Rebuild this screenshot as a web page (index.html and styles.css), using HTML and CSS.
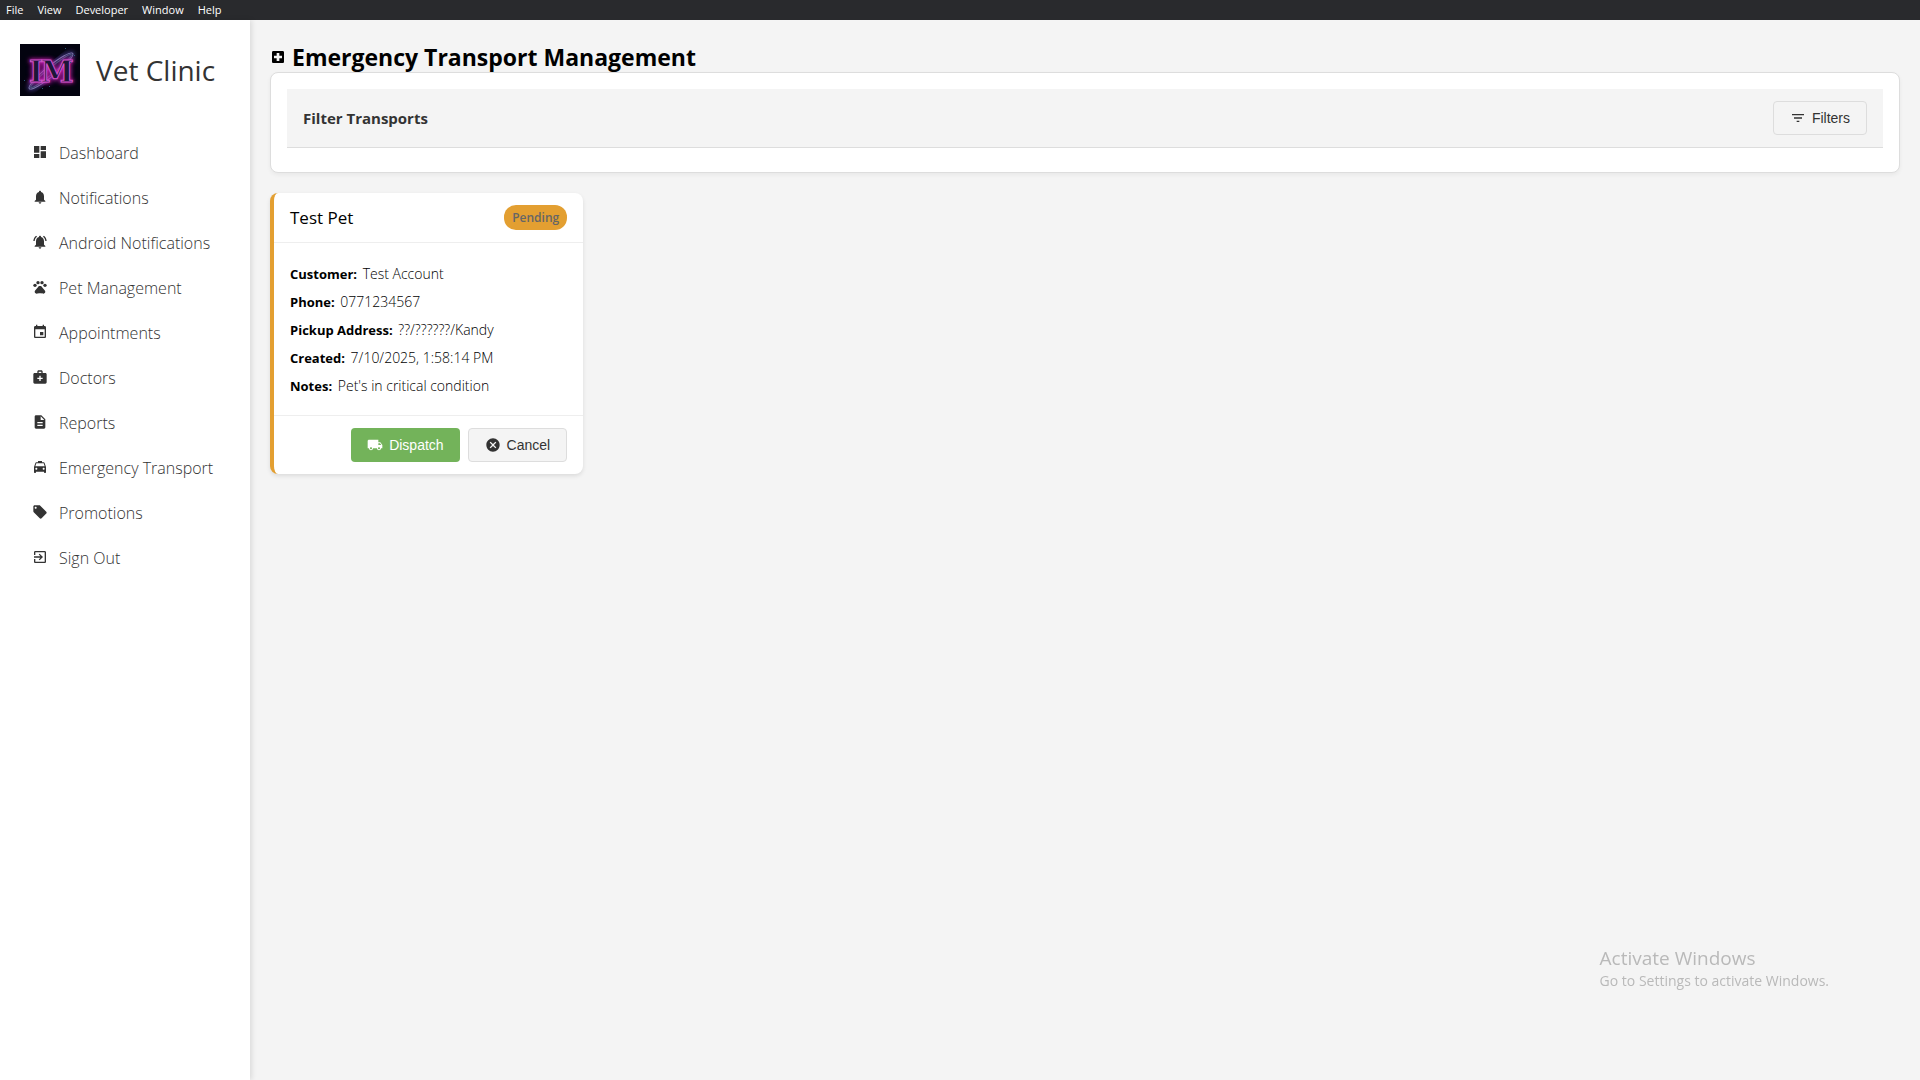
FILE: index.html
```html
<!DOCTYPE html>
<html lang="en">
<head>
    <meta charset="UTF-8">
    <meta name="viewport" content="width=device-width, initial-scale=1.0">
    <title>Vet Clinic</title>
    <link rel="stylesheet" href="styles.css">
</head>
<body>
    <!-- Menu bar -->
    <div class="menubar">
        <button type="button">File</button>
        <button type="button">View</button>
        <button type="button">Developer</button>
        <button type="button">Window</button>
        <button type="button">Help</button>
    </div>

    <div class="app">
        <!-- Sidebar -->
        <aside class="sidebar">
            <div class="brand">
                <svg class="logo" viewBox="0 0 60 52">
                    <defs>
                        <filter id="glow" x="-20%" y="-20%" width="140%" height="140%">
                            <feGaussianBlur stdDeviation="2"/>
                        </filter>
                    </defs>
                    <rect width="60" height="52" fill="#03030f"/>
                    <ellipse cx="31" cy="27" rx="22" ry="12" fill="#3a0f55" opacity="0.4" filter="url(#glow)"/>
                    <g fill="none" transform="rotate(-39 31 27)">
                        <ellipse cx="31" cy="27" rx="28" ry="5" stroke="#4a3a8c" stroke-width="3" filter="url(#glow)"/>
                        <ellipse cx="31" cy="27" rx="28" ry="5" stroke="#7d7aac" stroke-width="1"/>
                        <ellipse cx="31" cy="27" rx="26" ry="3" stroke="#4a5a7c" stroke-width="1"/>
                    </g>
                    <g class="logo-text logo-glow" filter="url(#glow)">
                        <text x="16" y="38">I</text>
                        <text x="37" y="38">M</text>
                    </g>
                    <g class="logo-text">
                        <text x="16" y="38">I</text>
                        <text x="37" y="38">M</text>
                    </g>
                    <g fill="#2b5a7a">
                        <rect x="45" y="4" width="1" height="1"/>
                        <rect x="54" y="11" width="1" height="1"/>
                        <rect x="50" y="18" width="1" height="1"/>
                        <rect x="4" y="36" width="1" height="1"/>
                        <rect x="22" y="44" width="1" height="1"/>
                        <rect x="29" y="42" width="1" height="1"/>
                    </g>
                </svg>
                <span class="brand-name">Vet Clinic</span>
            </div>
            <nav class="nav">
                <a href="#dashboard"><svg class="icon" viewBox="0 0 24 24"><path d="M3 13h8V3H3v10zm0 8h8v-6H3v6zm10 0h8V11h-8v10zm0-18v6h8V3h-8z"/></svg>Dashboard</a>
                <a href="#notifications"><svg class="icon" viewBox="0 0 24 24"><path d="M12 22c1.1 0 2-.9 2-2h-4c0 1.1.89 2 2 2zm6-6v-5c0-3.07-1.64-5.64-4.5-6.32V4c0-.83-.67-1.5-1.5-1.5s-1.5.67-1.5 1.5v.68C7.63 5.36 6 7.92 6 11v5l-2 2v1h16v-1l-2-2z"/></svg>Notifications</a>
                <a href="#android"><svg class="icon" viewBox="0 0 24 24"><path d="M7.58 4.08L6.15 2.65C3.75 4.48 2.17 7.3 2.03 10.5h2c.15-2.65 1.51-4.97 3.55-6.42zm12.39 6.42h2c-.15-3.2-1.73-6.02-4.12-7.85l-1.42 1.43c2.02 1.45 3.39 3.77 3.54 6.42zM18 11c0-3.07-1.64-5.64-4.5-6.32V4c0-.83-.67-1.5-1.5-1.5s-1.5.67-1.5 1.5v.68C7.63 5.36 6 7.92 6 11v5l-2 2v1h16v-1l-2-2v-5zm-6 11c.14 0 .27-.01.4-.04.65-.14 1.18-.58 1.44-1.18.1-.24.15-.5.15-.78h-4c.01 1.1.9 2 2.01 2z"/></svg>Android Notifications</a>
                <a href="#pets"><svg class="icon" viewBox="0 0 24 24"><circle cx="4.5" cy="9.5" r="2.5"/><circle cx="9" cy="5.5" r="2.5"/><circle cx="15" cy="5.5" r="2.5"/><circle cx="19.5" cy="9.5" r="2.5"/><path d="M17.34 14.86c-.87-1.02-1.6-1.89-2.48-2.91-.46-.54-1.05-1.08-1.75-1.32-.11-.04-.22-.07-.33-.09-.25-.04-.52-.04-.78-.04s-.53 0-.79.05c-.11.02-.22.05-.33.09-.7.24-1.28.78-1.75 1.32-.87 1.02-1.6 1.89-2.48 2.91-1.31 1.31-2.92 2.76-2.62 4.79.29 1.02 1.02 2.03 2.33 2.32.73.15 3.06-.44 5.54-.44h.18c2.48 0 4.81.58 5.54.44 1.31-.29 2.04-1.31 2.33-2.32.31-2.04-1.3-3.49-2.61-4.8z"/></svg>Pet Management</a>
                <a href="#appointments"><svg class="icon" viewBox="0 0 24 24"><path d="M17 12h-5v5h5v-5zM16 1v2H8V1H6v2H5c-1.11 0-1.99.9-1.99 2L3 19c0 1.1.89 2 2 2h14c1.1 0 2-.9 2-2V5c0-1.1-.9-2-2-2h-1V1h-2zm3 18H5V8h14v11z"/></svg>Appointments</a>
                <a href="#doctors"><svg class="icon" viewBox="0 0 24 24"><path d="M20 6h-4V4c0-1.1-.9-2-2-2h-4c-1.1 0-2 .9-2 2v2H4c-1.1 0-2 .9-2 2v12c0 1.1.9 2 2 2h16c1.1 0 2-.9 2-2V8c0-1.1-.9-2-2-2zM10 4h4v2h-4V4zm6 11h-3v3h-2v-3H8v-2h3v-3h2v3h3v2z"/></svg>Doctors</a>
                <a href="#reports"><svg class="icon" viewBox="0 0 24 24"><path d="M14 2H6c-1.1 0-1.99.9-1.99 2L4 20c0 1.1.89 2 1.99 2H18c1.1 0 2-.9 2-2V8l-6-6zm2 16H8v-2h8v2zm0-4H8v-2h8v2zm-3-5V3.5L18.5 9H13z"/></svg>Reports</a>
                <a href="#transport"><svg class="icon" viewBox="0 0 24 24"><path d="M18.92 6.01C18.72 5.42 18.16 5 17.5 5H15V3H9v2H6.5c-.66 0-1.21.42-1.42 1.01L3 12v8c0 .55.45 1 1 1h1c.55 0 1-.45 1-1v-1h12v1c0 .55.45 1 1 1h1c.55 0 1-.45 1-1v-8l-2.08-5.99zM6.5 16c-.83 0-1.5-.67-1.5-1.5S5.67 13 6.5 13s1.5.67 1.5 1.5S7.33 16 6.5 16zm11 0c-.83 0-1.5-.67-1.5-1.5s.67-1.5 1.5-1.5 1.5.67 1.5 1.5-.67 1.5-1.5 1.5zM5 11l1.5-4.5h11L19 11H5z"/></svg>Emergency Transport</a>
                <a href="#promotions"><svg class="icon" viewBox="0 0 24 24"><path d="M21.41 11.58l-9-9C12.05 2.22 11.55 2 11 2H4c-1.1 0-2 .9-2 2v7c0 .55.22 1.05.59 1.42l9 9c.36.36.86.58 1.41.58.55 0 1.05-.22 1.41-.59l7-7c.37-.36.59-.86.59-1.41 0-.55-.23-1.06-.59-1.42zM5.5 7C4.67 7 4 6.33 4 5.5S4.67 4 5.5 4 7 4.67 7 5.5 6.33 7 5.5 7z"/></svg>Promotions</a>
                <a href="#signout"><svg class="icon" viewBox="0 0 24 24"><path d="M10.09 15.59L11.5 17l5-5-5-5-1.41 1.41L12.67 11H3v2h9.67l-2.58 2.59zM19 3H5c-1.11 0-2 .9-2 2v4h2V5h14v14H5v-4H3v4c0 1.1.89 2 2 2h14c1.1 0 2-.9 2-2V5c0-1.1-.9-2-2-2z"/></svg>Sign Out</a>
            </nav>
        </aside>

        <!-- Emergency transport page -->
        <main class="content">
            <h1 class="page-title"><svg class="icon" viewBox="0 0 24 24"><path d="M19 3H5c-1.1 0-1.99.9-1.99 2L3 19c0 1.1.9 2 2 2h14c1.1 0 2-.9 2-2V5c0-1.1-.9-2-2-2zm-1 11h-4v4h-4v-4H6v-4h4V6h4v4h4v4z"/></svg>Emergency Transport Management</h1>

            <section class="filter-panel">
                <div class="filter-header">
                    <h2>Filter Transports</h2>
                    <button type="button" class="btn"><svg class="icon" viewBox="0 0 24 24"><path d="M10 18h4v-2h-4v2zM3 6v2h18V6H3zm3 7h12v-2H6v2z"/></svg>Filters</button>
                </div>
            </section>

            <div class="transport-grid">
                <article class="transport-card">
                    <div class="card-header">
                        <h3>Test Pet</h3>
                        <span class="badge">Pending</span>
                    </div>
                    <div class="card-body">
                        <p><strong>Customer:</strong> Test Account</p>
                        <p><strong>Phone:</strong> 0771234567</p>
                        <p><strong>Pickup Address:</strong> ??/??????/Kandy</p>
                        <p><strong>Created:</strong> 7/10/2025, 1:58:14 PM</p>
                        <p><strong>Notes:</strong> Pet's in critical condition</p>
                    </div>
                    <div class="card-actions">
                        <button type="button" class="btn btn-success"><svg class="icon" viewBox="0 0 24 24"><path d="M20 8h-3V4H3c-1.1 0-2 .9-2 2v11h2c0 1.66 1.34 3 3 3s3-1.34 3-3h6c0 1.66 1.34 3 3 3s3-1.34 3-3h2v-5l-3-4zM6 18.5c-.83 0-1.5-.67-1.5-1.5s.67-1.5 1.5-1.5 1.5.67 1.5 1.5-.67 1.5-1.5 1.5zm13.5-9l1.96 2.5H17V9.5h2.5zm-1.5 9c-.83 0-1.5-.67-1.5-1.5s.67-1.5 1.5-1.5 1.5.67 1.5 1.5-.67 1.5-1.5 1.5z"/></svg>Dispatch</button>
                        <button type="button" class="btn"><svg class="icon" viewBox="0 0 24 24"><path d="M12 2C6.47 2 2 6.47 2 12s4.47 10 10 10 10-4.47 10-10S17.53 2 12 2zm5 13.59L15.59 17 12 13.41 8.41 17 7 15.59 10.59 12 7 8.41 8.41 7 12 10.59 15.59 7 17 8.41 13.41 12 17 15.59z"/></svg>Cancel</button>
                    </div>
                </article>
            </div>
        </main>
    </div>

    <!-- System notice over the page -->
    <div class="watermark">
        <div class="watermark-title">Activate Windows</div>
        <div>Go to Settings to activate Windows.</div>
    </div>
</body>
</html>
```
FILE: styles.css
```css
:root {
    --dark: #333;
    --light: #f4f4f4;
    --border: #ddd;
    --warning: #e39f31;
    --success: #73b35a;
}

* {
    box-sizing: border-box;
    margin: 0;
    padding: 0;
}

body {
    display: flex;
    flex-direction: column;
    min-height: 100vh;
    background: var(--light);
    color: #000;
    font-family: 'Segoe UI', 'Open Sans', sans-serif;
    font-size: 14px;
}

.icon {
    flex: none;
    width: 16px;
    height: 16px;
    fill: currentColor;
}

/* Menu bar */
.menubar {
    display: flex;
    gap: 2px;
    height: 20px;
    background: #292a2d;
}

.menubar button {
    padding: 0 6px;
    border: none;
    background: none;
    color: #fff;
    font-family: inherit;
    font-size: 11px;
    line-height: 18px;
}

.app {
    display: flex;
    flex: 1;
}

/* Sidebar */
.sidebar {
    flex: none;
    width: 250px;
    padding: 24px 20px;
    background: #fff;
    box-shadow: 2px 0 5px rgba(0, 0, 0, 0.1);
}

.brand {
    display: flex;
    align-items: center;
    gap: 16px;
    margin-bottom: 34px;
    color: var(--dark);
}

.logo {
    width: 60px;
    height: 52px;
}

.logo-text {
    fill: #1c1638;
    stroke: #d057cc;
    stroke-width: 1;
    font-family: 'DejaVu Serif', serif;
    font-size: 30px;
    font-weight: bold;
    text-anchor: middle;
}

.logo-glow {
    stroke: #e01fc0;
    stroke-width: 2;
}

.brand-name {
    font-size: 28px;
    line-height: 52px;
}

.nav a {
    display: flex;
    align-items: center;
    gap: 11px;
    height: 45px;
    padding: 0 12px;
    color: var(--dark);
    font-size: 16px;
    font-weight: 300;
    text-decoration: none;
}

.nav .icon {
    margin-bottom: 2px;
}

/* Content */
.content {
    flex: 1;
    padding: 22px 20px;
}

.page-title {
    display: flex;
    align-items: center;
    gap: 6px;
    font-size: 23px;
    line-height: 30px;
}

.btn {
    display: flex;
    align-items: center;
    gap: 6px;
    height: 34px;
    padding: 0 16px;
    border: 1px solid var(--border);
    border-radius: 4px;
    background: var(--light);
    color: var(--dark);
    font-family: 'Liberation Sans', Arial, sans-serif;
    font-size: 14px;
    cursor: pointer;
}

.btn-success {
    border: none;
    background: var(--success);
    color: #fff;
}

/* Filters */
.filter-panel {
    margin-bottom: 20px;
    padding: 16px 16px 24px;
    border: 1px solid var(--border);
    border-radius: 8px;
    background: #fff;
    box-shadow: 0 2px 4px rgba(0, 0, 0, 0.05);
}

.filter-header {
    display: flex;
    justify-content: space-between;
    align-items: center;
    padding: 12px 16px;
    border-bottom: 1px solid var(--border);
    background: var(--light);
    color: var(--dark);
}

.filter-header h2 {
    font-size: 15px;
}

/* Transport cards */
.transport-grid {
    display: grid;
    grid-template-columns: repeat(auto-fill, minmax(300px, 1fr));
    gap: 16px;
}

.transport-card {
    border-left: 4px solid var(--warning);
    border-radius: 8px;
    background: #fff;
    box-shadow: 0 2px 4px rgba(0, 0, 0, 0.1);
}

.card-header {
    display: flex;
    justify-content: space-between;
    align-items: center;
    padding: 12px 16px;
    border-bottom: 1px solid #eee;
}

.card-header h3 {
    font-size: 17px;
    font-weight: 500;
    line-height: 25px;
}

.badge {
    padding: 0 8px;
    border-radius: 12px;
    background: var(--warning);
    color: #666;
    font-size: 12px;
    font-weight: 600;
    line-height: 25px;
}

.card-body {
    padding: 17px 16px 15px;
    font-size: 14px;
    font-weight: 300;
    line-height: 28px;
}

.card-body p {
    height: 28px;
}

.card-body strong {
    margin-right: 2px;
    font-size: 13px;
    font-weight: 700;
}

.card-actions {
    display: flex;
    justify-content: flex-end;
    gap: 8px;
    padding: 12px 16px;
    border-top: 1px solid #eee;
}

/* Activation notice */
.watermark {
    position: fixed;
    right: 91px;
    bottom: 89px;
    color: #b9b9b9;
    font-size: 14px;
    line-height: 20px;
    pointer-events: none;
}

.watermark-title {
    font-size: 19px;
    line-height: 25px;
}
```
